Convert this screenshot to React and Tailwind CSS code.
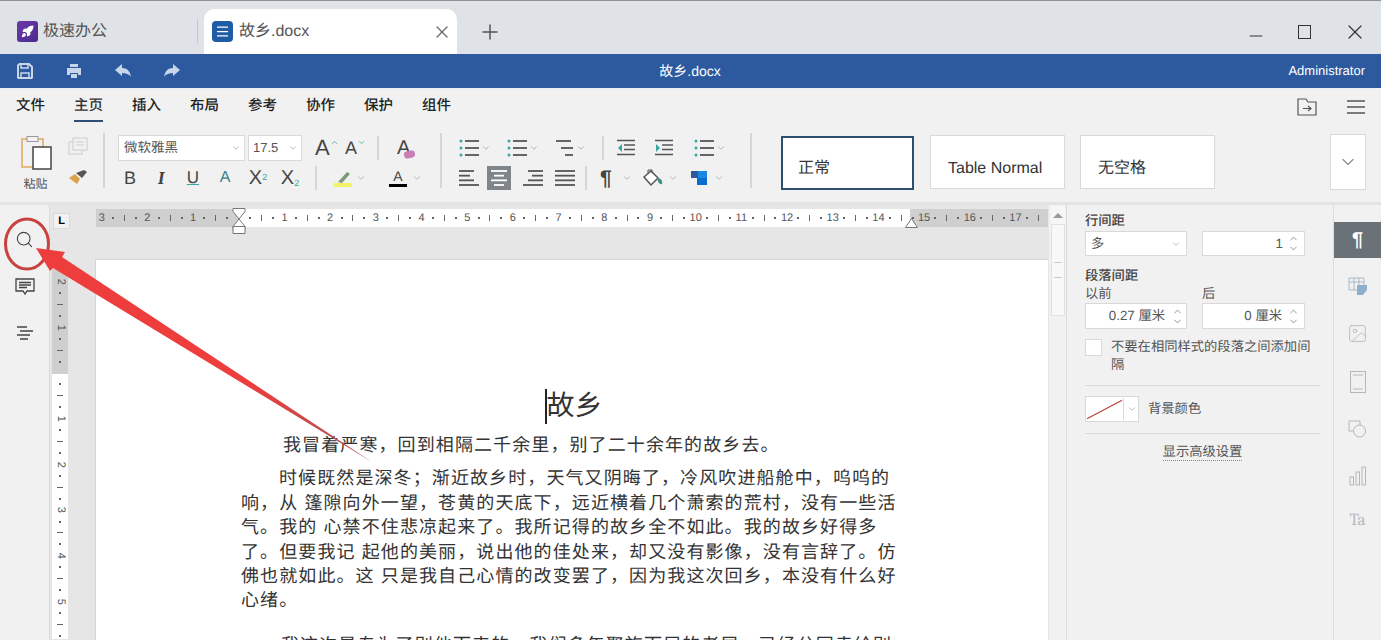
import React from "react";
import { Rocket, X, Plus, Minus, ChevronDown, ChevronUp, Search, Image, Menu } from "lucide-react";

const cjk = "font-['Liberation_Sans','Noto_Sans_CJK_SC',sans-serif]";

const Chev = ({ className = "" }) => (
  <ChevronDown size={10} strokeWidth={1.5} className={`text-[#8a8f94] shrink-0 ${className}`} />
);

const Sep = ({ className = "h-[24px]" }) => <div className={`w-[2px] bg-[#d6d6d6] shrink-0 ${className}`} />;

// horizontal bars with optional bullets, used by every list / align button
const Lines = ({ rows, bullets, color = "#555" }) => (
  <svg width="22" height="20" viewBox="0 0 22 20" className="shrink-0">
    {rows.map(([x1, x2], i) => (
      <line key={i} x1={x1} x2={x2} y1={3 + i * (14 / (rows.length - 1))} y2={3 + i * (14 / (rows.length - 1))} stroke={color} strokeWidth="1.8" />
    ))}
    {bullets &&
      rows.map((_, i) => (
        <circle key={i} cx="3" cy={3 + i * (14 / (rows.length - 1))} r="1.5" fill="#3aa6a0" />
      ))}
  </svg>
);

const Indent = ({ flip }) => (
  <svg width="18" height="18" viewBox="0 0 18 18" className="shrink-0">
    <path d="M0 1.500h18M7 6h11M7 10.500h11M0 15.500h18" stroke="#555" strokeWidth="1.700" />
    <path d={flip ? "M1 5v8l4-4z" : "M5 5v8L1 9z"} fill="#3aa6a0" />
  </svg>
);

const full = [[1, 21], [1, 21], [1, 21], [1, 21]];

const Ruler = () => {
  const nums = ["3", "2", "1", "", "1", "2", "3", "4", "5", "6", "7", "8", "9", "10", "11", "12", "13", "14", "15", "16", "17"];
  return (
    <div className="relative w-[952px] h-[18px] flex overflow-hidden">
      <div className="w-[142px] bg-[#cfcfcf]" />
      <div className="w-[672px] bg-white" />
      <div className="flex-1 bg-[#cfcfcf]" />
      <div className="absolute inset-0 flex text-[11px] text-[#555]">
        {nums.map((n, i) => (
          <div key={i} className="w-[45.7px] shrink-0 flex items-center">
            <span className="w-[11.4px] flex justify-center">{n}</span>
            <span className="w-[11.4px] flex justify-center"><i className="block w-[2px] h-[2px] bg-[#666]" /></span>
            <span className="w-[11.4px] flex justify-center"><i className="block w-[1px] h-[6px] bg-[#666]" /></span>
            <span className="w-[11.4px] flex justify-center"><i className="block w-[2px] h-[2px] bg-[#666]" /></span>
          </div>
        ))}
      </div>
    </div>
  );
};

const VRuler = () => {
  const nums = ["2", "1", "", "1", "2", "3", "4", "5", "6"];
  return (
    <div className="relative w-[16px] h-[370px] mt-[10px] ml-[2px] flex flex-col overflow-hidden shrink-0">
      <div className="h-[105px] bg-[#cfcfcf]" />
      <div className="flex-1 bg-white" />
      <div className="absolute inset-0 pt-[7px] flex flex-col text-[11px] text-[#555]">
        {nums.map((n, i) => (
          <div key={i} className="h-[45.7px] shrink-0 flex flex-col items-center">
            <span className="h-[11.4px] flex items-center rotate-90 leading-none">{n}</span>
            <span className="h-[11.4px] flex items-center"><i className="block w-[2px] h-[2px] bg-[#666]" /></span>
            <span className="h-[11.4px] flex items-center"><i className="block w-[6px] h-[1px] bg-[#666]" /></span>
            <span className="h-[11.4px] flex items-center"><i className="block w-[2px] h-[2px] bg-[#666]" /></span>
          </div>
        ))}
      </div>
    </div>
  );
};

const Spin = () => (
  <div className="flex flex-col items-center text-[#666] shrink-0">
    <ChevronUp size={11} strokeWidth={1.5} className="-mb-[1px]" />
    <ChevronDown size={11} strokeWidth={1.5} />
  </div>
);

const Field = ({ children, className = "" }) => (
  <div className={`bg-white border border-[#d9d9d9] flex items-center ${className}`}>{children}</div>
);

const StyleBox = ({ children, className = "" }) => (
  <div className={`h-[54px] bg-white flex items-end pb-[7px] text-[16px] text-[#333] shrink-0 ${className}`}>{children}</div>
);

const Overlay = () => (
  <svg width="1381" height="640" viewBox="0 0 1381 640" className="absolute left-0 top-0 pointer-events-none">
    <defs>
      <linearGradient id="tail" x1="36" y1="248" x2="372" y2="462" gradientUnits="userSpaceOnUse">
        <stop offset="0.62" stopColor="#ee3d3d" />
        <stop offset="0.9" stopColor="#b9504f" />
      </linearGradient>
    </defs>
    <ellipse cx="27" cy="244" rx="21.5" ry="25" fill="none" stroke="#c8423f" strokeWidth="3" />
    <polygon points="36,248 65,252 62,257 372,462 53,268 50,271" fill="url(#tail)" />
  </svg>
);

export default function App() {
  return (
    <div className={`relative w-[1381px] h-[640px] overflow-hidden flex flex-col bg-[#f1f1f1] text-[#333] [text-rendering:geometricPrecision] ${cjk}`}>
      {/* tabs */}
      <div className="h-[54px] bg-[#dfe2e6] border-t border-[#8d9296] flex items-end shrink-0">
        <div className="w-[197px] h-[45px] flex items-center pl-[17px] gap-[5px] shrink-0">
          <div className="w-[21px] h-[21px] rounded-[3px] bg-gradient-to-br from-[#6b3aa8] to-[#4a2a8c] flex items-center justify-center">
            <Rocket size={13} className="text-white fill-white" />
          </div>
          <span className="text-[16px] text-[#555] mt-[1px]">极速办公</span>
        </div>
        <div className="w-[1px] h-[24px] bg-[#c4c7ca] mb-[11px] shrink-0" />
        <div className="w-[253px] h-[45px] ml-[6px] bg-white rounded-t-[10px] flex items-center pl-[8px] pr-[5px] gap-[6px] shrink-0">
          <div className="w-[21px] h-[21px] rounded-[4px] bg-[#205ca6] flex items-center justify-center">
            <Menu size={15} className="text-white" />
          </div>
          <span className="text-[16px] text-[#555] flex-1 mt-[1px]">故乡.docx</span>
          <X size={20} strokeWidth={1.5} className="text-[#666]" />
        </div>
        <div className="w-[66px] h-[45px] flex items-center justify-center shrink-0">
          <Plus size={24} strokeWidth={1.5} className="text-[#555]" />
        </div>
        <div className="flex-1 h-[45px] flex items-center justify-end pr-[14px] gap-[32px] text-[#333]">
          <Minus size={20} strokeWidth={1.2} className="mt-[8px]" />
          <i className="block w-[13px] h-[14px] border border-[#333]" />
          <X size={24} strokeWidth={1.2} />
        </div>
      </div>

      {/* blue title bar */}
      <div className="relative h-[34px] bg-[#2d5a9f] flex items-center shrink-0 pl-[17px] pr-[16px]">
        <div className="flex items-center gap-[33px] text-[#c9d6ea]">
          <svg width="16" height="16" viewBox="0 0 16 16" fill="none" stroke="currentColor" strokeWidth="2"><path d="M1 2.500 2.500 1H12l3 3v10.500l-.5.5h-13l-.5-.5z" /><path d="M4 1v4h7V1M4 15v-5h8v5" strokeWidth="1.500" /></svg>
          <svg width="16" height="16" viewBox="0 0 16 16" fill="currentColor"><path d="M4 1h8v3H4zM1 5h14v7h-3v-2H4v2H1zM5 11h6v4H5z" /></svg>
          <svg width="16" height="14" viewBox="0 0 16 14" fill="currentColor"><path d="M0 6 7 0v4c5 0 8 3 9 9-2-3-5-4-9-4v3z" /></svg>
          <svg width="16" height="14" viewBox="0 0 16 14" fill="currentColor"><path d="M16 6 9 0v4C4 4 1 7 0 13c2-3 5-4 9-4v3z" /></svg>
        </div>
        <span className="absolute left-[640px] w-[100px] text-center text-white text-[14px]">故乡.docx</span>
        <span className="ml-auto text-white text-[13px]">Administrator</span>
      </div>

      {/* menu */}
      <div className="h-[36px] flex items-start pl-[16px] pr-[16px] pt-[7px] shrink-0 border-t border-[#e6eef6]">
        <div className="flex gap-[29px] text-[14.5px] font-medium text-[#222]">
          <span>文件</span>
          <span className="text-[#333] h-[26px] border-b-2 border-[#2f4f73]">主页</span>
          <span>插入</span>
          <span>布局</span>
          <span>参考</span>
          <span>协作</span>
          <span>保护</span>
          <span>组件</span>
        </div>
        <div className="ml-auto flex items-center gap-[30px] text-[#555] mt-[2px]">
          <svg width="20" height="18" viewBox="0 0 20 18" fill="none" stroke="currentColor" strokeWidth="1.200"><path d="M1 1h8l2 3h8v13H1z" /><path d="M6 10.500h8M11 8l3 2.500-3 2.500" /></svg>
          <svg width="18" height="14" viewBox="0 0 18 14" stroke="currentColor" strokeWidth="1.300"><path d="M0 1h18M0 7h18M0 13h18" /></svg>
        </div>
      </div>

      {/* toolbar */}
      <div className="h-[81px] flex items-start pt-[3px] border-b-[3px] border-[#e3e3e3] shrink-0">
        {/* paste */}
        <div className="w-[53px] ml-[9px] flex flex-col items-center shrink-0">
          <svg width="34" height="36" viewBox="0 0 34 36" fill="none" className="mt-[8px]">
            <path d="M3 4h21v28H3z" stroke="#e2a85c" strokeWidth="1.500" />
            <rect x="8" y="1.500" width="11" height="5" fill="#f3f3f3" stroke="#999" />
            <rect x="14" y="12" width="18" height="22" fill="#fff" stroke="#444" strokeWidth="1.500" />
          </svg>
          <span className="text-[12px] text-[#555] mt-[4px]">粘贴</span>
        </div>
        <div className="w-[22px] ml-[5px] flex flex-col items-center gap-[14px] mt-[10px] shrink-0">
          <svg width="20" height="18" viewBox="0 0 20 18" fill="none" stroke="#d8d8d8" strokeWidth="1.500"><path d="M5 1h14v12H5zM1 5h4M1 5v12h13v-4M8 5h8M8 8h8" /></svg>
          <svg width="20" height="18" viewBox="0 0 20 18"><path d="M1 9 9 15 12 10 7 5z" fill="#d9a24a" /><path d="M8 4 14 9 19 3 16 1z" fill="#555" /></svg>
        </div>
        <Sep className="h-[55px] ml-[14px] mt-[6px]" />

        {/* font group */}
        <div className="ml-[13px] mt-[8px] w-[322px] flex flex-col gap-[4px] shrink-0">
          <div className="flex items-center h-[26px]">
            <Field className="w-[127px] h-[26px] pl-[5px] pr-[3px] text-[13.5px] text-[#555]"><span className="flex-1">微软雅黑</span><Chev /></Field>
            <Field className="w-[54px] h-[26px] ml-[3px] pl-[4px] pr-[3px] text-[13px] text-[#555]"><span className="flex-1">17.5</span><Chev /></Field>
            <span className="w-[30px] ml-[13px] flex items-start text-[22px] leading-none text-[#444]">A<ChevronUp size={9} strokeWidth={2} className="text-[#3aa6a0] mt-[1px]" /></span>
            <span className="w-[24px] flex items-start text-[18px] leading-none text-[#444]">A<ChevronDown size={9} strokeWidth={2} className="text-[#3aa6a0] -mt-[1px]" /></span>
            <Sep className="h-[24px] ml-[8px]" />
            <span className="ml-[18px] relative text-[20px] leading-none text-[#444]">A<i className="absolute -right-[5px] bottom-[0px] w-[11px] h-[7px] rounded-[3px] bg-[#c97fb4] -rotate-12" /></span>
          </div>
          <div className="flex items-center h-[26px] text-[#444]">
            <span className="w-[24px] text-center text-[18px]">B</span>
            <span className="w-[38px] text-center text-[18px] font-serif italic font-semibold">I</span>
            <span className="w-[26px] text-center text-[17px] underline decoration-[#3aa6a0]">U</span>
            <span className="w-[38px] text-center text-[16px] text-[#3f7f8a]">A</span>
            <span className="w-[28px] text-center text-[20px] whitespace-nowrap">X<sup className="text-[9px] text-[#3aa6a0]">2</sup></span>
            <span className="w-[36px] text-center text-[20px] whitespace-nowrap">X<sub className="text-[9px] text-[#3aa6a0]">2</sub></span>
            <Sep className="h-[24px] ml-[7px]" />
            <div className="w-[51px] ml-[17px] flex items-center gap-[4px]">
              <span className="w-[18px] flex flex-col items-center">
                <svg width="16" height="13" viewBox="0 0 16 13"><path d="M3 12 12 2l3 2-8 9z" fill="#7d9a78" /></svg>
                <i className="block w-[18px] h-[4px] bg-[#f3f06a]" />
              </span>
              <Chev />
            </div>
            <div className="w-[40px] ml-[4px] flex items-center gap-[5px]">
              <span className="w-[18px] flex flex-col items-center text-[14px] leading-[14px]">A<i className="block w-[18px] h-[3px] bg-black mt-[1px]" /></span>
              <Chev />
            </div>
          </div>
        </div>
        <Sep className="h-[55px] mt-[6px]" />

        {/* paragraph group */}
        <div className="ml-[16px] mt-[8px] w-[292px] flex flex-col gap-[4px] shrink-0">
          <div className="flex items-center h-[26px]">
            <div className="w-[48px] flex items-center gap-[1px]"><Lines bullets rows={[[7, 21], [7, 21], [7, 21]]} /><Chev /></div>
            <div className="w-[47px] flex items-center gap-[1px]"><Lines bullets rows={[[7, 21], [7, 21], [7, 21]]} /><Chev /></div>
            <div className="w-[49px] flex items-center gap-[1px]"><Lines rows={[[3, 18], [8, 20], [12, 20]]} /><Chev /></div>
            <Sep className="h-[24px] mr-[13px]" />
            <div className="w-[38px]"><Indent /></div>
            <div className="w-[38px]"><Indent flip /></div>
            <div className="flex items-center gap-[1px]"><Lines bullets rows={[[7, 21], [7, 21], [7, 21]]} /><Chev /></div>
          </div>
          <div className="flex items-center h-[26px]">
            <div className="w-[29px]"><Lines rows={[[1, 16], [1, 12], [1, 16], [1, 21]]} /></div>
            <div className="w-[24px] h-[24px] bg-[#80858a] flex items-center justify-center"><Lines color="#fff" rows={[[3, 19], [6, 16], [3, 19], [6, 16]]} /></div>
            <div className="w-[32px] ml-[11px]"><Lines rows={[[6, 21], [10, 21], [6, 21], [1, 21]]} /></div>
            <div className="w-[31px]"><Lines rows={full} /></div>
            <Sep className="h-[24px]" />
            <span className="ml-[13px] text-[21px] font-bold text-[#444] leading-none w-[21px]">¶</span>
            <Chev className="ml-[1px]" />
            <svg width="22" height="20" viewBox="0 0 22 20" className="ml-[10px]" fill="none"><path d="M2 9 9 3 16 10 9 17z" stroke="#555" strokeWidth="1.500" fill="#fff" /><path d="M6 5V2h4v3" stroke="#555" /><path d="M15 10c4 0 6 3 5 6-2 1-4-1-5-6z" fill="#3e8f8a" /></svg>
            <Chev className="ml-[4px]" />
            <svg width="18" height="18" viewBox="0 0 18 18" className="ml-[13px]"><rect x="0" y="2" width="10" height="7" fill="#2d5a9f" /><rect x="7" y="2" width="9" height="14" fill="#1a86e0" /><rect x="6" y="9" width="10" height="7" fill="#0b6ecf" /></svg>
            <Chev className="ml-[5px]" />
          </div>
        </div>
        <Sep className="h-[55px] mt-[6px]" />

        {/* styles */}
        <StyleBox className="w-[133px] pl-[15px] ml-[29px] mt-[9px] border-2 border-[#2d4f70]">正常</StyleBox>
        <StyleBox className="w-[135px] pl-[17px] ml-[16px] mt-[8px] border border-[#d9d9d9]">Table Normal</StyleBox>
        <StyleBox className="w-[135px] pl-[17px] ml-[15px] mt-[8px] border border-[#d9d9d9]">无空格</StyleBox>
        <div className="w-[36px] h-[56px] ml-[115px] mt-[7px] bg-white border border-[#d9d9d9] flex items-center justify-center shrink-0">
          <ChevronDown size={20} strokeWidth={1.5} className="text-[#8a8f94]" />
        </div>
      </div>

      {/* workspace */}
      <div className="flex-1 flex min-h-0">
        {/* left rail */}
        <div className="w-[50px] flex flex-col items-center border-r border-[#dcdcdc] shrink-0 pl-[1px] text-[#444]">
          <Search size={19} strokeWidth={1.4} className="mt-[25px] mr-[2px]" />
          <svg width="20" height="18" viewBox="0 0 20 18" fill="none" stroke="currentColor" strokeWidth="1.300" className="mt-[29px]"><path d="M1 1h18v12h-7l-2 3-2-3H1z" /><path d="M4 4.500h12M4 7h12M4 9.500h8" /></svg>
          <svg width="18" height="14" viewBox="0 0 18 14" stroke="currentColor" strokeWidth="1.400" className="mt-[30px]"><path d="M1 1h10M4 5h13M1 9h13M4 13h8" /></svg>
        </div>

        {/* document area */}
        <div className="relative w-[999px] bg-[#e6e6e6] flex flex-col shrink-0 overflow-hidden">
          <div className="h-[54px] flex items-start shrink-0">
            <div className="w-[17px] h-[16px] ml-[3px] mt-[8px] bg-[#f1f1f1] border border-[#d9d9d9] flex items-center justify-center text-[11px] font-bold leading-none text-black">L</div>
            <div className="ml-[26px] mt-[4px]"><Ruler /></div>
          </div>
          <div className="absolute left-[182px] top-[3px]">
            <svg width="14" height="26" viewBox="0 0 14 26" fill="#fff" stroke="#777"><path d="M1 .5h12v3L7 11 1 3.500z" /><path d="M7 11l6 7.500v3H1v-3z" /><path d="M1 18.500h12v7H1z" /></svg>
          </div>
          <div className="absolute left-[855px] top-[13px]">
            <svg width="13" height="10" viewBox="0 0 13 10" fill="#fff" stroke="#777"><path d="M6.500.5 12.500 9.500H.5z" /></svg>
          </div>
          <div className="flex flex-1 min-h-0">
            <VRuler />
            <div className="relative ml-[27px] w-[953px] shrink-0 bg-white border-l border-t border-[#d4d4d4] pt-[126px] text-[18px] tracking-[1.1px] text-[#333] leading-[24.4px]">
              <div className="h-[40px] flex items-center pl-[449px] text-[28px] leading-none tracking-normal">
                <span className="w-[1.5px] h-[35px] bg-[#222]" />
                <span>故乡</span>
              </div>
              <p className="pl-[187px] mt-[7px] whitespace-nowrap">我冒着严寒，回到相隔二千余里，别了二十余年的故乡去。</p>
              <div className="pl-[145px] mt-[9px] whitespace-nowrap">
                <p className="pl-[38px]">时候既然是深冬；渐近故乡时，天气又阴晦了，冷风吹进船舱中，呜呜的</p>
                <p>响，从 篷隙向外一望，苍黄的天底下，远近横着几个萧索的荒村，没有一些活</p>
                <p>气。我的 心禁不住悲凉起来了。我所记得的故乡全不如此。我的故乡好得多</p>
                <p>了。但要我记 起他的美丽，说出他的佳处来，却又没有影像，没有言辞了。仿</p>
                <p>佛也就如此。这 只是我自己心情的改变罢了，因为我这次回乡，本没有什么好</p>
                <p>心绪。</p>
              </div>
              <p className="pl-[185px] mt-[20px] whitespace-nowrap">我这次是专为了别他而来的。我们多年聚族而居的老屋，已经公同卖给别</p>
            </div>
          </div>
        </div>

        {/* scrollbar */}
        <div className="w-[17px] bg-[#f1f1f1] flex flex-col items-center shrink-0">
          <div className="w-[14px] h-[18px] mt-[1px] bg-[#f6f6f6] flex items-center justify-center">
            <i className="block w-0 h-0 border-x-[5px] border-x-transparent border-b-[5px] border-b-[#999]" />
          </div>
          <div className="w-[14px] h-[92px] bg-[#f8f8f8] border border-[#e2e2e2] flex items-center justify-center">
            <i className="block w-[8px] h-[16px] border-y border-[#ccc]" />
          </div>
        </div>

        {/* right panel */}
        <div className="w-[267px] border-l border-[#dcdcdc] pl-[18px] pr-[12px] pt-[7px] text-[13.3px] text-[#555] shrink-0">
          <div className="font-medium text-[#444] leading-[17px]">行间距</div>
          <div className="flex gap-[15px] mt-[2px]">
            <Field className="w-[102px] h-[25px] pl-[5px] pr-[5px] justify-between"><span>多</span><Chev /></Field>
            <Field className="w-[103px] h-[25px] justify-end pr-[5px] gap-[5px]"><span>1</span><Spin /></Field>
          </div>
          <div className="font-medium text-[#444] leading-[17px] mt-[11px]">段落间距</div>
          <div className="flex leading-[17px] mt-[1px]">
            <span className="w-[117px]">以前</span>
            <span>后</span>
          </div>
          <div className="flex gap-[15px] mt-[1px]">
            <Field className="w-[102px] h-[26px] justify-end pr-[3px] gap-[7px]"><span>0.27 厘米</span><Spin /></Field>
            <Field className="w-[103px] h-[26px] justify-end pr-[5px] gap-[6px]"><span>0 厘米</span><Spin /></Field>
          </div>
          <div className="flex mt-[10px] gap-[9px]">
            <div className="w-[17px] h-[17px] bg-white border border-[#d9d9d9] shrink-0" />
            <div className="w-[205px] leading-[18px] mt-[-1px]">不要在相同样式的段落之间添加间隔</div>
          </div>
          <div className="h-[1px] bg-[#d9d9d9] mt-[11px] w-[235px]" />
          <div className="flex items-center mt-[10px]">
            <div className="w-[54px] h-[26px] bg-white border border-[#d9d9d9] flex items-center shrink-0">
              <svg width="38" height="22" viewBox="0 0 38 22" className="border-r border-[#d9d9d9]"><line x1="1" y1="21" x2="37" y2="2" stroke="#b5403f" strokeWidth="1.200" /></svg>
              <Chev className="ml-[3px]" />
            </div>
            <span className="ml-[9px]">背景颜色</span>
          </div>
          <div className="h-[1px] bg-[#d9d9d9] mt-[11px] w-[235px]" />
          <div className="w-[235px] flex justify-center mt-[9px]">
            <span className="border-b border-dotted border-[#888] leading-[17px]">显示高级设置</span>
          </div>
        </div>

        {/* right icon rail */}
        <div className="flex-1 border-l border-[#dcdcdc] flex flex-col items-center text-[#b4b8bb]">
          <div className="w-full h-[36px] mt-[17px] bg-[#6a7177] text-white flex items-center justify-center text-[20px] font-bold">¶</div>
          <svg width="22" height="20" viewBox="0 0 22 20" fill="none" stroke="#a9b8c6" className="mt-[18px]"><path d="M2 2h15v12H2zM2 6h15M7 2v12M12 2v12" /><path d="M10 9h10v5l-4 5h-6z" fill="#8fb0cc" stroke="none" /></svg>
          <Image size={21} strokeWidth={1} className="mt-[27px]" />
          <svg width="16" height="22" viewBox="0 0 16 22" fill="none" stroke="currentColor" className="mt-[27px]"><rect x=".5" y=".5" width="15" height="21" /><path d="M3 4h10M3 18h10" /></svg>
          <svg width="19" height="18" viewBox="0 0 19 18" fill="none" stroke="currentColor" className="mt-[27px]"><path d="M1 1h11v4M1 1v10h4" /><circle cx="11.500" cy="11" r="6" /></svg>
          <svg width="18" height="20" viewBox="0 0 18 20" fill="none" stroke="currentColor" className="mt-[28px]"><rect x="1" y="11" width="3.500" height="8" /><rect x="7" y="6" width="3.500" height="13" /><rect x="13" y="1" width="3.500" height="18" /></svg>
          <span className="mt-[26px] text-[17px] leading-none font-serif">Ta</span>
        </div>
      </div>

      <Overlay />
    </div>
  );
}
